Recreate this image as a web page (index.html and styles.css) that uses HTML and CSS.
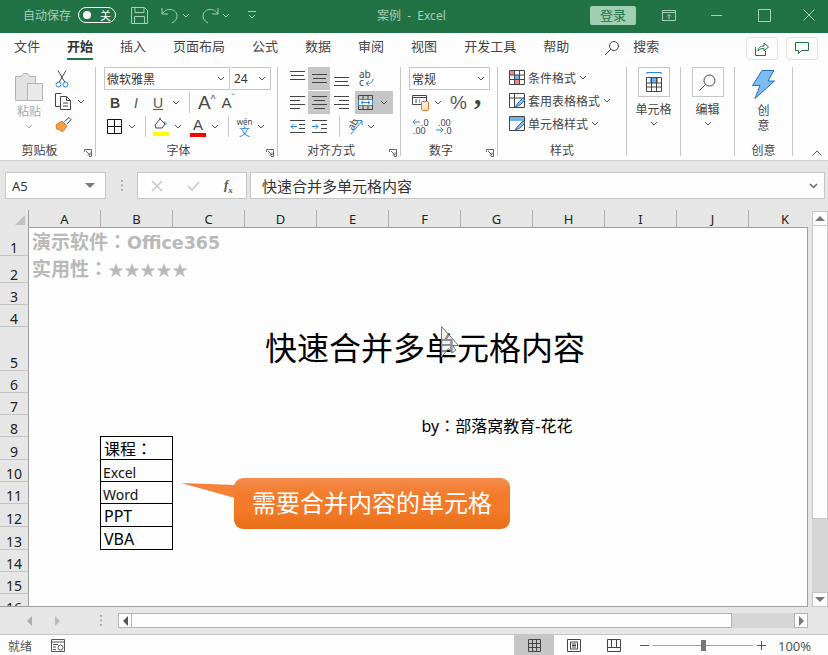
FILE: index.html
```html
<!DOCTYPE html>
<html lang="zh-CN">
<head>
    <meta charset="utf-8">
    <title>案例 - Excel</title>
    <link rel="stylesheet" href="styles.css">
</head>
<body>
    <!-- title bar -->
    <div class="titlebar">
        <span class="autosave">自动保存</span>
        <div class="toggle"><i></i><span>关</span></div>
        <svg class="tb-save" width="17" height="17" viewBox="0 0 17 17"><path d="M.5.5h13l3 3v13H.5zM4 .5v5h9v-5M3.500 16.500v-7h10v7"/></svg>
        <svg class="tb-undo" width="18" height="17" viewBox="0 0 18 17"><path d="M1 1v6h6M1.500 6.500C4 3 7 2 10 2.500c4 .8 6 3.500 6 6.500 0 2.500-1.500 5-5 7"/></svg>
        <svg class="chev tb-chev" width="8" height="5" viewBox="0 0 8 5"><path d="M1 1l3 3 3-3"/></svg>
        <svg class="tb-redo" width="18" height="17" viewBox="0 0 18 17"><path d="M17 1v6h-6M16.500 6.500C14 3 11 2 8 2.500c-4 .8-6 3.500-6 6.500 0 2.500 1.500 5 5 7"/></svg>
        <svg class="chev tb-chev" width="8" height="5" viewBox="0 0 8 5"><path d="M1 1l3 3 3-3"/></svg>
        <svg class="tb-custom" width="8" height="8" viewBox="0 0 8 8"><path d="M0 .5h8M1 4l3 3 3-3"/></svg>
        <span class="doc-title">案例&nbsp; -&nbsp; Excel</span>
        <a class="login">登录</a>
        <svg class="tb-display" width="14" height="11" viewBox="0 0 14 11"><path d="M.5.5h13v10H.5zM.5 2.500h13M7 9V4.500M5 6.500l2-2 2 2"/></svg>
        <svg class="tb-min" width="11" height="1" viewBox="0 0 11 1"><path d="M0 .5h11"/></svg>
        <svg class="tb-max" width="13" height="13" viewBox="0 0 13 13"><path d="M.5.5h12v12H.5z"/></svg>
        <svg class="tb-close" width="12" height="12" viewBox="0 0 12 12"><path d="M.5.5l11 11M11.500.5l-11 11"/></svg>
    </div>

    <!-- tabs -->
    <div class="tabs">
        <a>文件</a>
        <a class="active">开始</a>
        <a>插入</a>
        <a>页面布局</a>
        <a>公式</a>
        <a>数据</a>
        <a>审阅</a>
        <a>视图</a>
        <a>开发工具</a>
        <a>帮助</a>
        <svg class="tab-search" width="16" height="16" viewBox="0 0 16 16"><circle cx="10" cy="6" r="4.500"/><path d="M6.800 9.200L1 15"/></svg>
        <a class="search-text">搜索</a>
        <div class="tab-btn first"><svg width="14" height="14" viewBox="0 0 14 14"><path class="g" d="M.5 5v8.500h10V9M3 9c0-3 2-5 6-5V1l4.500 4L9 9V6.500C6 6.500 4.500 7 3 9z"/></svg></div>
        <div class="tab-btn"><svg width="14" height="13" viewBox="0 0 14 13"><path class="g" d="M.5.500h13v8h-7l-3 3v-3h-3z"/></svg></div>
    </div>

    <!-- ribbon -->
    <div class="ribbon">
        <div class="group w-clip">
            <div class="body">
                <div class="paste">
                    <svg width="28" height="29" viewBox="0 0 28 29"><path class="lg" d="M.5 4.500h6v-1l2-2h4l2 2v1h6v24H.5z"/><path class="lw" d="M12.500 11.500h15v17h-15z"/></svg>
                    <span>粘贴</span>
                    <svg class="chev pale" width="8" height="5" viewBox="0 0 8 5"><path d="M1 1l3 3 3-3"/></svg>
                </div>
                <div class="clip-tools">
                    <div class="row"><svg width="14" height="18" viewBox="0 0 14 18"><path d="M3 .5l7 12M11 .5l-7 12"/><circle class="b" cx="3.500" cy="14.500" r="2.500"/><circle class="b" cx="10.500" cy="14.500" r="2.500"/></svg></div>
                    <div class="row"><svg width="17" height="17" viewBox="0 0 17 17"><path d="M5 13.500H.5V.5h6M5.500 3.500h6l4 4v9h-10zM11.500 3.500v4h4M8 10h5M8 13h5"/></svg><svg class="chev ml" width="8" height="5" viewBox="0 0 8 5"><path d="M1 1l3 3 3-3"/></svg></div>
                    <div class="row"><svg width="17" height="15" viewBox="0 0 17 15"><path class="or" d="M1 8l6-4 5 5-4 5.500-3-1-1-1.500-2 .5z"/><path d="M9.500 4.500L14 .5l2 2-4 4.500"/></svg></div>
                </div>
            </div>
            <div class="foot"><span>剪贴板</span><svg class="launch" width="8" height="8" viewBox="0 0 8 8"><path d="M.5 3V.5h7v7H5M2 2l4 4M6 3.500V6H3.500"/></svg></div>
        </div>

        <div class="group w-font">
            <div class="rows">
                <div class="row">
                    <div class="combo font-name"><span>微软雅黑</span><svg class="chev" width="8" height="5" viewBox="0 0 8 5"><path d="M1 1l3 3 3-3"/></svg></div>
                    <div class="combo font-size"><span>24</span><svg class="chev" width="8" height="5" viewBox="0 0 8 5"><path d="M1 1l3 3 3-3"/></svg></div>
                </div>
                <div class="row font-row">
                    <b class="f-b">B</b>
                    <i class="f-i">I</i>
                    <u class="f-u">U</u>
                    <svg class="chev f-uc" width="8" height="5" viewBox="0 0 8 5"><path d="M1 1l3 3 3-3"/></svg>
                    <span class="vsep f-s1"></span>
                    <span class="f-big">A<sup>^</sup></span>
                    <span class="f-small">A<sup>ˇ</sup></span>
                </div>
                <div class="row font-row">
                    <svg class="f-border" width="15" height="15" viewBox="0 0 15 15"><path class="k" d="M.5.500h14v14H.5zM7.500 0v15M0 7.500h15"/></svg>
                    <svg class="chev f-bc" width="8" height="5" viewBox="0 0 8 5"><path d="M1 1l3 3 3-3"/></svg>
                    <span class="vsep f-s2"></span>
                    <svg class="f-fill" width="16" height="19" viewBox="0 0 16 19"><path d="M2 8l5-6 5 5-3 4H3zM7 2V.5"/><path class="b" d="M13 8c.5-2-.5-3-2-3"/><rect class="yl" y="15" width="16" height="4"/></svg>
                    <svg class="chev f-fc" width="8" height="5" viewBox="0 0 8 5"><path d="M1 1l3 3 3-3"/></svg>
                    <div class="f-color"><span>A</span><i></i></div>
                    <svg class="chev f-cc" width="8" height="5" viewBox="0 0 8 5"><path d="M1 1l3 3 3-3"/></svg>
                    <span class="vsep f-s3"></span>
                    <div class="f-wen"><span>wén</span><span>文</span></div>
                    <svg class="chev f-wc" width="8" height="5" viewBox="0 0 8 5"><path d="M1 1l3 3 3-3"/></svg>
                </div>
            </div>
            <div class="foot"><span>字体</span><svg class="launch" width="8" height="8" viewBox="0 0 8 8"><path d="M.5 3V.5h7v7H5M2 2l4 4M6 3.500V6H3.500"/></svg></div>
        </div>

        <div class="group w-align">
            <div class="rows">
                <div class="row">
                    <div class="al"><svg width="15" height="15" viewBox="0 0 15 15"><path d="M0 .5h15M1 4.500h13M0 8.500h15"/></svg></div>
                    <div class="al on"><svg width="15" height="15" viewBox="0 0 15 15"><path d="M0 3.500h15M1 7.500h13M0 11.500h15"/></svg></div>
                    <div class="al"><svg width="15" height="15" viewBox="0 0 15 15"><path d="M0 6.500h15M1 10.500h13M0 14.500h15"/></svg></div>
                    <svg class="wrap-ico" width="15" height="18" viewBox="0 0 15 18"><text class="t" x="0" y="8">ab</text><text class="t" x="0" y="16">c</text><path class="b" d="M14 9c0 3-2 4.500-6 4.500M10 11l-3 2.500 3 2.500"/></svg>
                </div>
                <div class="row">
                    <div class="al"><svg width="15" height="15" viewBox="0 0 15 15"><path d="M0 1.500h15M0 5.500h10M0 9.500h15M0 13.500h10"/></svg></div>
                    <div class="al on"><svg width="15" height="15" viewBox="0 0 15 15"><path d="M0 1.500h15M2 5.500h11M0 9.500h15M2 13.500h11"/></svg></div>
                    <div class="al"><svg width="15" height="15" viewBox="0 0 15 15"><path d="M0 1.500h15M5 5.500h10M0 9.500h15M5 13.500h10"/></svg></div>
                    <div class="merge"><svg width="15" height="15" viewBox="0 0 15 15"><path d="M.5.500h14v14H.5zM5 .5v4M10 .5v4M5 10.500v4M10 10.500v4"/><path class="wf" d="M.5 4.500h14v6H.5z"/><path class="b" d="M3 7.500h9M5 5.800L3 7.500l2 1.700M10 5.800l2 1.700-2 1.700"/></svg><svg class="chev" width="8" height="5" viewBox="0 0 8 5"><path d="M1 1l3 3 3-3"/></svg></div>
                </div>
                <div class="row">
                    <div class="al"><svg width="15" height="15" viewBox="0 0 15 15"><path d="M0 1.500h15M9 5.500h6M9 9.500h6M0 13.500h15"/><path class="b" d="M7 7.500H1M3.500 5l-2.500 2.500L3.500 10"/></svg></div>
                    <div class="al"><svg width="15" height="15" viewBox="0 0 15 15"><path d="M0 1.500h15M9 5.500h6M9 9.500h6M0 13.500h15"/><path class="b" d="M0 7.500h6M3.500 5L6 7.500 3.500 10"/></svg></div>
                    <span class="vsep a-sep"></span>
                    <svg class="orient" width="17" height="17" viewBox="0 0 17 17"><text class="t" transform="translate(7 13) rotate(-60)" x="0" y="0">ab</text><path class="b" d="M5 16L16 3M11 2.500h5V7"/></svg>
                    <svg class="chev a-oc" width="8" height="5" viewBox="0 0 8 5"><path d="M1 1l3 3 3-3"/></svg>
                </div>
            </div>
            <div class="foot"><span>对齐方式</span><svg class="launch" width="8" height="8" viewBox="0 0 8 8"><path d="M.5 3V.5h7v7H5M2 2l4 4M6 3.500V6H3.500"/></svg></div>
        </div>

        <div class="group w-num">
            <div class="rows">
                <div class="row">
                    <div class="combo num-fmt"><span>常规</span><svg class="chev" width="8" height="5" viewBox="0 0 8 5"><path d="M1 1l3 3 3-3"/></svg></div>
                </div>
                <div class="row num-row">
                    <svg class="n-acc" width="17" height="17" viewBox="0 0 17 17"><path d="M.5 1.500h14v9H.5zM.5 3.500h14M3 6h2M3 8h2M7 6h1M7 8h1"/><rect class="orf" x="9.500" y="7.500" width="7" height="9" rx="1"/></svg>
                    <svg class="chev n-ac" width="8" height="5" viewBox="0 0 8 5"><path d="M1 1l3 3 3-3"/></svg>
                    <span class="n-pct">%</span>
                    <span class="n-comma">,</span>
                </div>
                <div class="row num-row">
                    <svg class="n-inc" width="18" height="17" viewBox="0 0 18 17"><text class="t9" x="9" y="8">.0</text><text class="t9" x="1" y="16">.00</text><path class="b" d="M8 4H1M3.500 1.500L1 4l2.500 2.500"/></svg>
                    <svg class="n-dec" width="18" height="17" viewBox="0 0 18 17"><text class="t9" x="3" y="8">.00</text><text class="t9" x="9" y="16">.0</text><path class="b" d="M1 12h7M5.500 9.500L8 12l-2.500 2.500"/></svg>
                </div>
            </div>
            <div class="foot"><span>数字</span><svg class="launch" width="8" height="8" viewBox="0 0 8 8"><path d="M.5 3V.5h7v7H5M2 2l4 4M6 3.500V6H3.500"/></svg></div>
        </div>

        <div class="group w-style">
            <div class="rows style-rows">
                <div class="row">
                    <svg width="16" height="15" viewBox="0 0 16 15"><rect class="pk" x="1" y="1" width="5" height="4"/><rect class="pk" x="5" y="9" width="6" height="5"/><rect class="blf" x="5" y="5" width="6" height="4"/><path d="M.5.500h15v14H.5zM5.500.5v14M10.500.5v14M.5 5h15M.5 9.500h15"/></svg>
                    <span>条件格式</span><svg class="chev" width="8" height="5" viewBox="0 0 8 5"><path d="M1 1l3 3 3-3"/></svg>
                </div>
                <div class="row">
                    <svg width="16" height="15" viewBox="0 0 16 15"><path d="M.5.500h15v14H.5zM.5 5h15M5.500.5v14"/><path class="br" d="M6 14l3-4 5-5 2 2-5 5z"/></svg>
                    <span>套用表格格式</span><svg class="chev" width="8" height="5" viewBox="0 0 8 5"><path d="M1 1l3 3 3-3"/></svg>
                </div>
                <div class="row">
                    <svg width="16" height="15" viewBox="0 0 16 15"><rect class="blf" x="1" y="1" width="14" height="4"/><path d="M.5.500h15v14H.5z"/><path class="br" d="M6 14l3-4 5-5 2 2-5 5z"/></svg>
                    <span>单元格样式</span><svg class="chev" width="8" height="5" viewBox="0 0 8 5"><path d="M1 1l3 3 3-3"/></svg>
                </div>
            </div>
            <div class="foot no-launch"><span>样式</span></div>
        </div>

        <div class="group w-big">
            <div class="big-box"><svg width="16" height="20" viewBox="0 0 16 20"><path class="b" d="M1 .5h14M1 0v2M15 0v2"/><rect class="blf" x="4" y="5" width="8" height="6"/><path d="M.5 5.500h15v14H.5zM.5 11h15M.5 15h15M5.500 5.500v14M10.500 5.500v14"/></svg></div>
            <span class="big-text">单元格</span>
            <svg class="chev" width="8" height="5" viewBox="0 0 8 5"><path d="M1 1l3 3 3-3"/></svg>
        </div>

        <div class="group w-big">
            <div class="big-box"><svg width="17" height="17" viewBox="0 0 17 17"><circle cx="10.500" cy="6.500" r="5.500"/><path d="M6.500 10.500L.5 16.500"/></svg></div>
            <span class="big-text">编辑</span>
            <svg class="chev" width="8" height="5" viewBox="0 0 8 5"><path d="M1 1l3 3 3-3"/></svg>
        </div>

        <div class="group w-idea">
            <svg class="bolt" width="23" height="29" viewBox="0 0 23 29"><path d="M10 .5h12L16 11h6.500L3 28.500l5-13H.5z"/></svg>
            <span class="idea-text">创</span>
            <span class="idea-text">意</span>
            <div class="foot no-launch"><span>创意</span></div>
        </div>

        <svg class="chev collapse" width="10" height="6" viewBox="0 0 10 6"><path d="M.5 5.500L5 1l4.500 4.500"/></svg>
    </div>

    <!-- formula bar -->
    <div class="formula">
        <div class="namebox"><span>A5</span><i class="tri-down"></i></div>
        <span class="dots"></span>
        <div class="fx-btns">
            <svg width="10" height="10" viewBox="0 0 10 10"><path d="M0 0l10 10M10 0L0 10"/></svg>
            <svg width="13" height="10" viewBox="0 0 13 10"><path d="M1 5l4 4 7-8"/></svg>
            <span>f<sub>x</sub></span>
        </div>
        <div class="fx-input"><span>快速合并多单元格内容</span><svg class="chev" width="9" height="6" viewBox="0 0 9 6"><path d="M1 1l3.500 3.500L8 1"/></svg></div>
    </div>

    <!-- sheet -->
    <div class="sheet-area">
        <div class="sheet">
            <div class="corner"><i></i></div>
            <div class="col-head">A</div>
            <div class="col-head">B</div>
            <div class="col-head">C</div>
            <div class="col-head">D</div>
            <div class="col-head">E</div>
            <div class="col-head">F</div>
            <div class="col-head">G</div>
            <div class="col-head">H</div>
            <div class="col-head">I</div>
            <div class="col-head">J</div>
            <div class="col-head last">K</div>

            <div class="pane"></div>

            <div class="row-head r1">1</div>
            <div class="row-head r2">2</div>
            <div class="row-head r3">3</div>
            <div class="row-head r4">4</div>
            <div class="row-head r5">5</div>
            <div class="row-head r6">6</div>
            <div class="row-head r7">7</div>
            <div class="row-head r8">8</div>
            <div class="row-head r9">9</div>
            <div class="row-head r10">10</div>
            <div class="row-head r11">11</div>
            <div class="row-head r12">12</div>
            <div class="row-head r13">13</div>
            <div class="row-head r14">14</div>
            <div class="row-head r15">15</div>
            <div class="row-head r16">16</div>

            <div class="note r1"><span>演示软件<span class="colon" lang="zh-TW">：</span><em>Office365</em></span></div>
            <div class="note r2"><span>实用性<span class="colon" lang="zh-TW">：</span><small>★★★★★</small></span></div>
            <div class="title-cell r5">快速合并多单元格内容</div>
            <div class="by-cell r8">by<span class="colon" lang="zh-TW">：</span>部落窝教育-花花</div>
            <div class="td r9"><span>课程<span class="colon" lang="zh-TW">：</span></span></div>
            <div class="td sm r10">Excel</div>
            <div class="td sm r11">Word</div>
            <div class="td r12">PPT</div>
            <div class="td r13">VBA</div>

            <!-- callout and cursor lie over the cells -->
            <div class="callout">
                <svg class="tail" width="54" height="15" viewBox="0 0 54 15"><path d="M0 0l54 2v13z"/></svg>
                <span>需要合并内容的单元格</span>
            </div>
            <svg class="cursor" width="19" height="32" viewBox="0 0 19 32"><path d="M.5.500v30.500l7-8.500 3.500 4.500 4-3-3.500-4.500h6z"/></svg>
        </div>
        <div class="vscroll">
            <div class="sb-btn"><i class="tri-up"></i></div>
            <div class="v-thumb"></div>
            <div class="sb-track"></div>
            <div class="sb-btn"><i class="tri-down"></i></div>
        </div>
    </div>

    <!-- sheet tabs / horizontal scroll -->
    <div class="hbar">
        <i class="tri-left pale nav1"></i>
        <i class="tri-right pale nav2"></i>
        <span class="dots hdots"></span>
        <div class="hscroll">
            <div class="h-btn"><i class="tri-left"></i></div>
            <div class="h-thumb"></div>
            <div class="h-track"></div>
            <div class="h-btn"><i class="tri-right"></i></div>
        </div>
    </div>

    <!-- status bar -->
    <div class="status">
        <span class="ready">就绪</span>
        <svg class="macro" width="14" height="13" viewBox="0 0 14 13"><path d="M.5.500h13v12H.5zM.5 3h13M2 5.500h5M2 8h3M2 10.500h3"/><circle cx="9.500" cy="8.500" r="2.500"/></svg>
        <div class="view on"><svg width="13" height="13" viewBox="0 0 13 13"><path d="M.5.500h12v12H.5zM4.500.5v12M8.500.5v12M.5 4.500h12M.5 8.500h12"/></svg></div>
        <div class="view"><svg width="14" height="13" viewBox="0 0 14 13"><path d="M.5.500h13v12H.5zM3.500 3h7v7h-7zM5 5h4M5 6.500h4M5 8h4"/></svg></div>
        <div class="view"><svg width="14" height="13" viewBox="0 0 14 13"><path d="M.5.500h13v12H.5zM.5 8.500h13M4.500.5v8M9.500.5v8"/></svg></div>
        <span class="zoom-btn minus"></span>
        <div class="slider"><i></i></div>
        <span class="zoom-btn plus"></span>
        <span class="percent">100%</span>
    </div>
</body>
</html>
```

FILE: styles.css
```css
* {
    box-sizing: border-box;
}
html, body {
    margin: 0;
    padding: 0;
}
body {
    width: 828px;
    height: 655px;
    overflow: hidden;
    background-color: #e6e6e6;
    color: #444;
    font-family: "Noto Sans", "Noto Sans CJK SC", sans-serif;
    font-size: 12px;
}
svg {
    display: block;
    flex: none;
    fill: none;
    stroke: #444;
    stroke-width: 1;
    overflow: visible;
}
i, em {
    font-style: normal;
}

/* small shared icon parts */
.chev {
    stroke: #555;
}
.chev.pale {
    stroke: #aaa;
}
svg .b { stroke: #2b88d8; fill: none; }
svg .k { stroke: #111; }
svg .g { stroke: #217346; }
svg .lg { fill: #e2e2e2; stroke: #b4b4b4; }
svg .lw { fill: #e9e9e9; stroke: #b4b4b4; }
svg .or { fill: #f4a04b; stroke: #e8761e; }
svg .orf { fill: #fbe6d3; stroke: #e8761e; }
svg .yl { fill: #ffff00; stroke: none; }
svg .pk { fill: #f4848a; stroke: none; }
svg .blf { fill: #6fb3ea; stroke: none; }
svg .br { fill: #8cbce8; stroke: #2b6cb0; }
svg .wf { fill: #fdfdfd; stroke: #2b88d8; }
svg text {
    stroke: none;
    fill: #444;
}
svg .t { font-size: 10px; }
svg .t9 { font-size: 9px; }

.tri-down, .tri-up, .tri-left, .tri-right {
    display: block;
    width: 0;
    height: 0;
    border-style: solid;
    border-color: transparent;
}
.tri-down {
    border-width: 5px 5px 0;
    border-top-color: #777;
}
.tri-up {
    border-width: 0 5px 5px;
    border-bottom-color: #777;
}
.tri-left {
    border-width: 5px 5px 5px 0;
    border-right-color: #555;
}
.tri-right {
    border-width: 5px 0 5px 5px;
    border-left-color: #777;
}

/* title bar */
.titlebar {
    height: 33px;
    padding-bottom: 3px;
    background-color: #217346;
    display: flex;
    align-items: center;
    color: #a8cdb8;
}
.titlebar svg {
    stroke: #a8cdb8;
}
.autosave {
    margin-left: 23px;
    width: 48px;
}
.toggle {
    margin-left: 7px;
    width: 38px;
    height: 16px;
    border: 1px solid #fff;
    border-radius: 8px;
    display: flex;
    align-items: center;
    color: #fff;
    font-size: 11px;
}
.toggle i {
    width: 8px;
    height: 8px;
    margin-left: 4px;
    border-radius: 50%;
    background-color: #fff;
}
.toggle span {
    margin-left: 9px;
}
.tb-save { margin-left: 15px; }
.tb-undo { margin-left: 13px; }
.tb-chev { margin-left: 3px; }
.tb-redo { margin-left: 11px; }
.tb-custom { margin-left: 18px; }
.doc-title {
    width: 73px;
    margin-left: 121px;
    white-space: nowrap;
}
.login {
    margin-left: 140px;
    width: 46px;
    height: 19px;
    line-height: 19px;
    border-radius: 2px;
    background-color: #a0cfb3;
    color: #217346;
    font-size: 13px;
    text-align: center;
}
.tb-display { margin-left: 26px; }
.tb-min { margin-left: 35px; }
.tb-max { margin-left: 36px; }
.tb-close { margin-left: 32px; }

/* tabs */
.tabs {
    height: 27px;
    background-color: #fdfdfd;
    display: flex;
    align-items: flex-start;
    padding-left: 14px;
    gap: 27px;
    font-size: 13px;
    line-height: 27px;
}
.tabs a {
    height: 27px;
}
.tabs a.active {
    font-weight: bold;
    color: #333;
    border-bottom: 2px solid #217346;
}
.tab-search {
    margin: 7px 0 0 8px;
}
.tabs .search-text {
    margin-left: -14px;
}
.tab-btn {
    width: 32px;
    height: 23px;
    margin-top: 4px;
    border: 1px solid #eadfd6;
    border-radius: 3px;
    display: flex;
    align-items: center;
    justify-content: center;
}
.tab-btn.first {
    margin-left: 60px;
}
.tabs .tab-btn + .tab-btn {
    margin-left: -19px;
}

/* ribbon */
.ribbon {
    height: 101px;
    background-color: #fdfdfd;
    border-bottom: 1px solid #d2d2d2;
    display: flex;
    align-items: flex-start;
}
.group {
    height: 89px;
    margin: 7px 0 0;
    border-right: 1px solid #c6c6c6;
    display: flex;
    flex-direction: column;
    flex: none;
}
.w-clip { width: 96px; }
.w-font { width: 182px; }
.w-align { width: 123px; }
.w-num { width: 97px; }
.w-style { width: 129px; }
.w-big { width: 54px; align-items: center; }
.w-idea { width: 58px; align-items: center; }
.foot {
    height: 16px;
    margin-top: auto;
    margin-bottom: -3px;
    display: flex;
    align-items: center;
    width: 100%;
    line-height: 16px;
}
.foot span {
    flex: 1;
    text-align: center;
}
.launch {
    width: 8px;
    margin: 3px 3px 0 5px;
    stroke: #666;
}
.row {
    height: 23px;
    display: flex;
    align-items: center;
}
.rows {
    display: flex;
    flex-direction: column;
    gap: 1px;
}
.vsep {
    width: 1px;
    height: 21px;
    background-color: #c6c6c6;
}

/* clipboard */
.w-clip .body {
    display: flex;
}
.paste {
    width: 52px;
    margin-left: 3px;
    padding-top: 5px;
    display: flex;
    flex-direction: column;
    align-items: center;
    color: #aaa;
}
.paste span {
    margin-top: 2px;
    line-height: 18px;
}
.paste .chev {
    margin-top: 3px;
}
.ml {
    margin-left: 5px;
}

/* font */
.combo {
    height: 23px;
    border: 1px solid #c6c6c6;
    background-color: #fff;
    display: flex;
    align-items: center;
    justify-content: space-between;
    padding: 0 4px 0 2px;
    color: #333;
    font-size: 13px;
}
.font-name {
    width: 126px;
    margin-left: 8px;
    font-size: 12px;
}
.font-size {
    width: 40px;
    border-left: 0;
    margin-left: 1px;
    font-size: 12px;
    padding-left: 3px;
}
.f-b, .f-i, .f-u {
    width: 20px;
    text-align: center;
    font-family: "Liberation Sans", sans-serif;
    font-size: 14px;
}
.f-b { margin-left: 9px; }
.f-i { margin-left: 1px; font-style: italic; color: #555; }
.f-u { margin-left: 2px; color: #555; }
.f-uc { margin-left: 4px; }
.f-s1 { margin-left: 9px; }
.f-big {
    margin-left: 8px;
    font-family: "Liberation Sans", sans-serif;
    font-size: 19px;
    line-height: 20px;
}
.f-small {
    margin-left: 6px;
    font-family: "Liberation Sans", sans-serif;
    font-size: 15px;
    line-height: 20px;
}
.f-big sup, .f-small sup {
    font-size: 10px;
    vertical-align: 6px;
    line-height: 0;
}
.f-small sup {
    color: #2b88d8;
}
.f-border { margin-left: 11px; }
.f-bc { margin-left: 6px; }
.f-s2 { margin-left: 9px; }
.f-fill { margin-left: 7px; }
.f-fc { margin-left: 5px; }
.f-color {
    margin-left: 8px;
    width: 16px;
    display: flex;
    flex-direction: column;
    align-items: center;
    font-size: 15px;
    line-height: 15px;
    font-family: "Liberation Sans", sans-serif;
}
.f-color i {
    display: block;
    margin-top: 1px;
    width: 16px;
    height: 4px;
    background-color: #ff0000;
}
.f-cc { margin-left: 5px; }
.f-s3 { margin-left: 9px; }
.f-wen {
    margin-left: 8px;
    width: 15px;
    display: flex;
    flex-direction: column;
    align-items: center;
    font-size: 8px;
    line-height: 9px;
}
.f-wen span + span {
    color: #2b88d8;
    font-size: 11px;
    line-height: 11px;
}
.f-wc { margin-left: 5px; }

/* alignment */
.w-align .rows {
    padding-left: 8px;
}
.al {
    width: 22px;
    height: 23px;
    padding-left: 4px;
    display: flex;
    align-items: center;
}
.al.on {
    background-color: #c6c6c6;
}
.wrap-ico {
    margin-left: 7px;
}
.merge {
    margin-left: 3px;
    width: 38px;
    height: 23px;
    background-color: #c6c6c6;
    display: flex;
    align-items: center;
    padding-left: 3px;
    gap: 7px;
}
.a-sep { margin-left: 9px; }
.orient { margin-left: 6px; }
.a-oc { margin-left: 4px; }

/* number */
.num-fmt {
    width: 81px;
    margin-left: 8px;
    font-size: 12px;
}
.num-row {
    padding-left: 11px;
}
.n-ac { margin-left: 5px; }
.n-pct {
    margin-left: 8px;
    font-size: 19px;
    color: #555;
    font-family: "Liberation Sans", sans-serif;
    width: 18px;
    line-height: 20px;
}
.n-comma {
    margin-left: 6px;
    font-family: "Liberation Serif", serif;
    font-weight: bold;
    font-size: 30px;
    line-height: 20px;
    height: 20px;
    margin-top: -18px;
}
.n-dec { margin-left: 5px; }

/* styles */
.style-rows {
    padding-left: 11px;
    margin-top: -1px;
    gap: 0;
}
.style-rows .row span {
    margin: 0 3px 0 3px;
}

/* big buttons */
.big-box {
    width: 32px;
    height: 30px;
    border: 1px solid #c6c6c6;
    display: flex;
    align-items: center;
    justify-content: center;
}
.big-text {
    margin-top: 5px;
    line-height: 16px;
}
.w-big .chev {
    margin-top: 3px;
}
.bolt {
    margin-top: 3px;
    stroke: #1e6fc0;
    fill: #7dbcf0;
}
.idea-text {
    line-height: 15px;
}
.bolt + .idea-text {
    margin-top: 4px;
}
.collapse {
    margin: 90px 0 0 19px;
}

/* formula bar */
.formula {
    height: 49px;
    display: flex;
    align-items: center;
    padding: 0 3px 0 5px;
}
.namebox {
    width: 101px;
    height: 27px;
    background-color: #fdfdfd;
    border: 1px solid #c6c6c6;
    display: flex;
    align-items: center;
    justify-content: space-between;
    padding: 0 10px 0 6px;
    font-size: 13px;
    color: #333;
}
.dots {
    display: block;
    width: 2px;
    height: 11px;
    margin: 0 14px 0 15px;
    background-image: linear-gradient(#aaa 2px, transparent 2px);
    background-size: 2px 4.500px;
}
.fx-btns {
    width: 110px;
    height: 27px;
    background-color: #fdfdfd;
    border: 1px solid #c6c6c6;
    display: flex;
    align-items: center;
    padding-left: 14px;
    gap: 25px;
}
.fx-btns svg {
    stroke: #c6c6c6;
    stroke-width: 1.500;
}
.fx-btns span {
    font-family: "Liberation Serif", serif;
    font-style: italic;
    font-weight: bold;
    font-size: 13px;
    color: #555;
    margin-left: -1px;
}
.fx-btns sub {
    font-size: 9px;
}
.fx-input {
    width: 575px;
    height: 27px;
    margin-left: 3px;
    background-color: #fdfdfd;
    border: 1px solid #c6c6c6;
    display: flex;
    align-items: center;
    justify-content: space-between;
    padding: 0 6px 0 11px;
    font-size: 15px;
    color: #333;
}
.fx-input .chev {
    stroke: #666;
    stroke-width: 1.500;
}

/* sheet */
.sheet-area {
    height: 397px;
    display: flex;
    align-items: flex-start;
}
.sheet {
    position: relative;
    width: 808px;
    height: 397px;
    overflow: hidden;
    border-bottom: 1px solid #9f9f9f;
    display: grid;
    grid-template-columns: 29px repeat(10, 72px) 59px;
    grid-template-rows: 18px 28px 27px 22px 22px 44px 22px 22px 22px 23px 22px 22px 23px 23px 22px 22px 22px;
}
.corner {
    grid-row: 1;
    position: relative;
    border-right: 1px solid #9f9f9f;
}
.corner i {
    display: block;
    position: absolute;
    right: 3px;
    bottom: 3px;
    border-style: solid;
    border-width: 0 0 10px 10px;
    border-color: transparent transparent #c0c0c0;
}
.col-head {
    grid-row: 1;
    border-right: 1px solid #b0b0b0;
    border-bottom: 1px solid #9f9f9f;
    text-align: center;
    font-size: 13px;
    line-height: 19px;
    color: #222;
}
.col-head.last {
    border-right: 0;
    padding-left: 13px;
}
.pane {
    grid-column: 2 / -1;
    grid-row: 2 / -1;
    background-color: #fdfdfd;
    border-right: 1px solid #9f9f9f;
}
.row-head {
    grid-column: 1;
    border-right: 1px solid #9f9f9f;
    border-bottom: 1px solid #c4c4c4;
    display: flex;
    align-items: flex-end;
    justify-content: center;
    padding-bottom: 1px;
    font-size: 14px;
    line-height: 12px;
    color: #222;
    background-color: #e6e6e6;
}
.r1 { grid-row: 2; }
.r2 { grid-row: 3; }
.r3 { grid-row: 4; }
.r4 { grid-row: 5; }
.r5 { grid-row: 6; }
.r6 { grid-row: 7; }
.r7 { grid-row: 8; }
.r8 { grid-row: 9; }
.r9 { grid-row: 10; }
.r10 { grid-row: 11; }
.r11 { grid-row: 12; }
.r12 { grid-row: 13; }
.r13 { grid-row: 14; }
.r14 { grid-row: 15; }
.r15 { grid-row: 16; }
.r16 { grid-row: 17; }

.colon {
    font-family: "Noto Sans CJK TC", sans-serif;
}
.note {
    grid-column: 2 / span 5;
    padding: 0 0 2px 3px;
    font-size: 19px;
    line-height: 24px;
    font-weight: bold;
    color: #b9b9b9;
    white-space: nowrap;
    display: flex;
    align-items: flex-end;
}
.note.r1 {
    padding-bottom: 1px;
}
.note em {
    font-family: "DejaVu Sans", sans-serif;
    font-size: 17.500px;
    font-weight: bold;
}
.note small {
    font-size: 16px;
    font-weight: normal;
    font-family: "Noto Sans CJK SC", sans-serif;
}
.title-cell {
    grid-column: 2 / -1;
    padding: 0 0 2px 13px;
    align-self: end;
    text-align: center;
    color: #000;
    font-size: 32px;
    line-height: 42px;
}
.by-cell {
    grid-column: 6 / span 5;
    align-self: end;
    text-align: center;
    color: #000;
    font-size: 16px;
    line-height: 22px;
}
.td {
    grid-column: 3;
    margin: -1px 0 0 -1px;
    border: 1px solid #000;
    padding: 0 3px;
    color: #000;
    font-size: 16px;
    line-height: 20px;
    display: flex;
    align-items: flex-end;
    white-space: nowrap;
}
.td.sm {
    font-size: 14px;
    line-height: 17px;
    padding: 0 2px;
    color: #111;
}

.callout {
    position: absolute;
    left: 234px;
    top: 268px;
    width: 276px;
    height: 51px;
    border-radius: 9px;
    background: linear-gradient(#f48c4e, #f27a28 35%, #f27a28 65%, #e76e16);
    color: #fff;
    font-size: 24px;
    line-height: 50px;
    text-align: center;
}
.tail {
    position: absolute;
    left: -53px;
    top: 5px;
    stroke: none;
    fill: #f48238;
}
.callout span {
    position: relative;
}
.cursor {
    position: absolute;
    left: 441px;
    top: 116px;
    stroke: #777;
    fill: rgba(235, 235, 235, 0.6);
}

/* scrollbars */
.vscroll {
    width: 16px;
    height: 396px;
    margin: 1px 0 0 4px;
    display: flex;
    flex-direction: column;
}
.sb-btn {
    height: 15px;
    background-color: #fdfdfd;
    border: 1px solid #c6c6c6;
    display: flex;
    align-items: center;
    justify-content: center;
}
.v-thumb {
    height: 293px;
    background-color: #fdfdfd;
    border: 1px solid #c6c6c6;
    border-top: 0;
}
.sb-track {
    flex: 1;
    background-color: #d6d6d6;
}
.hbar {
    height: 27px;
    display: flex;
    align-items: center;
}
.hbar .pale {
    opacity: 0.4;
}
.nav1 { margin-left: 27px; }
.nav2 { margin-left: 23px; }
.hbar .hdots {
    margin: 0 16px 0 40px;
}
.hscroll {
    width: 690px;
    height: 15px;
    display: flex;
}
.h-btn {
    width: 14px;
    height: 15px;
    background-color: #fdfdfd;
    border: 1px solid #b4b4b4;
    display: flex;
    align-items: center;
    justify-content: center;
}
.h-thumb {
    width: 600px;
    background-color: #fdfdfd;
    border: 1px solid #b4b4b4;
    border-left: 0;
}
.h-track {
    flex: 1;
    background-color: #d6d6d6;
}

/* status bar */
.status {
    height: 22px;
    background-color: #fdfdfd;
    border-top: 1px solid #c6c6c6;
    display: flex;
    align-items: center;
    color: #555;
}
.ready {
    margin-left: 8px;
    width: 24px;
}
.macro {
    margin-left: 19px;
    stroke: #555;
}
.view {
    width: 40px;
    height: 21px;
    display: flex;
    align-items: center;
    justify-content: center;
}
.view.on {
    margin-left: 449px;
    background-color: #c6c6c6;
}
.zoom-btn {
    position: relative;
    display: block;
    width: 9px;
    height: 1px;
    background-color: #555;
}
.zoom-btn.minus {
    margin-left: 6px;
}
.zoom-btn.plus::after {
    content: "";
    position: absolute;
    left: 4px;
    top: -4px;
    width: 1px;
    height: 9px;
    background-color: #555;
}
.slider {
    position: relative;
    width: 100px;
    height: 1px;
    margin: 0 4px 0 4px;
    background-color: #a0a0a0;
}
.slider i {
    position: absolute;
    left: 48px;
    top: -5px;
    width: 5px;
    height: 11px;
    background-color: #777;
}
.percent {
    margin-left: 12px;
    font-size: 13px;
}
```
